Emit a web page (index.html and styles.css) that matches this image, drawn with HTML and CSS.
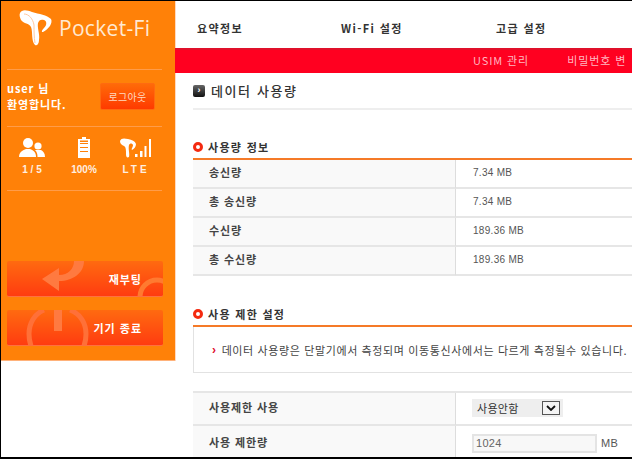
FILE: index.html
```html
<!DOCTYPE html>
<html lang="ko">
<head>
<meta charset="utf-8">
<title>Pocket-Fi</title>
<link rel="stylesheet" href="styles.css">
</head>
<body>
<div class="frame">
  <aside class="side">
    <div class="brand">
      <svg class="logo" width="34" height="38" viewBox="5 5 34 38"><path d="M6 9C8 5 13 6 18 8C25 10 33 11 37 15C39 19 35 25 29 28C27 28 28 26 30 24C33 21 33 17 30 16C27 15 25 16 24 19C23 24 26 30 25 36C25 40 23 42 21 41C17 37 19 28 17 23C15 19 10 20 7 16C6 14 5 11 6 9Z" fill="#fff"/><path d="M10 10C15 10 19 15 20 21C20 27 20 33 21 39" fill="none" stroke="#ffc9a0" stroke-width="1"/></svg>
      <span class="brand-name">Pocket-Fi</span>
    </div>
    <div class="user">
      <div class="welcome">user 님<br>환영합니다.</div>
      <button class="logout">로그아웃</button>
    </div>
    <div class="status">
      <div class="stat">
        <svg width="26" height="20" viewBox="0 0 26 20"><circle cx="9" cy="5" r="5" fill="#fff"/><path d="M0 19C0 14 4 12 7 11H11C14 12 17 14 17 19Z" fill="#fff"/><circle cx="19" cy="8" r="3.600" fill="#fff"/><path d="M16 12H22C24 13 26 15 26 19H18.500C18.500 16 18 14 16 12Z" fill="#fff"/></svg>
        <span>1 / 5</span>
      </div>
      <div class="stat">
        <svg width="14" height="21" viewBox="0 0 14 21"><path d="M5 0H9V2H13V21H1V2H5Z" fill="#fff"/><path d="M3 6.500H11M3 10.500H11M3 14.500H11" stroke="#ff8108" stroke-width="1.200"/><path d="M3 3.500H11V5H3Z" fill="#ff8108"/></svg>
        <span>100%</span>
      </div>
      <div class="stat">
        <svg width="33" height="20" viewBox="0 0 33 20"><path d="M0 3C1 0 4 0 8 1C12 2 15 3 16 6C16 9 14 11 12 12C11 11 13 9 13 7C12 5 10 5 9 7C8 11 10 16 9 19C7 20 6 19 6 16C6 12 6 9 4 8C2 7 0 6 0 3Z" fill="#fff"/><path d="M15 16H17.500V19H15ZM20 13H22.500V19H20ZM24.500 8H26.500V19H24.500ZM29 1H31V19H29Z" fill="#fff"/></svg>
        <span class="wide">LTE</span>
      </div>
    </div>
    <div class="actions">
      <button class="action">
        <svg class="bg-icon" width="156" height="36" viewBox="0 0 156 36"><path d="M77 0C77 12 66 20 52 20V30L35 18L52 7V14C61 14 67 8 67 0Z" fill="#ff7a40"/><circle cx="150" cy="36" r="17" fill="none" stroke="#ff7a30" stroke-width="5"/></svg>
        <span>재부팅</span>
      </button>
      <button class="action">
        <svg class="bg-icon" width="156" height="36" viewBox="0 0 156 36"><path d="M37 0C27 4 22 14 22 24C22 29 23 33 24 36M63 0C74 4 79 14 79 24C79 29 78 33 77 36" fill="none" stroke="#ff7038" stroke-width="5"/><path d="M47 0H55V21H47Z" fill="#ff7a40"/></svg>
        <span>기기 종료</span>
      </button>
    </div>
  </aside>
  <main class="main">
    <nav class="nav">
      <a>요약정보</a><a>Wi-Fi 설정</a><a>고급 설정</a>
    </nav>
    <div class="subnav"><a>USIM 관리</a><a>비밀번호 변</a></div>
    <div class="content">
      <h1 class="title"><span class="title-icon">›</span>데이터 사용량</h1>
      <h2 class="section first"><span class="dot"></span>사용량 정보</h2>
      <div class="table">
        <div class="th">송신량</div><div class="td">7.34 MB</div>
        <div class="th">총 송신량</div><div class="td">7.34 MB</div>
        <div class="th">수신량</div><div class="td">189.36 MB</div>
        <div class="th">총 수신량</div><div class="td">189.36 MB</div>
      </div>
      <h2 class="section second"><span class="dot"></span>사용 제한 설정</h2>
      <div class="notice"><span class="chev">›</span>데이터 사용량은 단말기에서 측정되며 이동통신사에서는 다르게 측정될수 있습니다.</div>
      <div class="table form">
        <div class="th">사용제한 사용</div>
        <div class="td"><div class="select"><span>사용안함</span><span class="arrow"><svg width="10" height="6" viewBox="0 0 10 6"><path d="M1 1L5 5L9 1" fill="none" stroke="#111" stroke-width="1.800"/></svg></span></div></div>
        <div class="th last">사용 제한량</div>
        <div class="td last"><div class="input">1024</div><span class="unit">MB</span></div>
      </div>
    </div>
  </main>
</div>
</body>
</html>
```
FILE: styles.css
```css
* { box-sizing: border-box; }
html, body { margin: 0; padding: 0; background: #fff; }
body { font-family: "Noto Sans CJK KR", "Liberation Sans", sans-serif; font-size: 11px; color: #333; }
.frame { width: 632px; height: 459px; border: solid #000; border-width: 1px 0 2px 1px; display: flex; align-items: flex-start; overflow: hidden; }

.side { width: 174px; height: 360px; flex: none; background: #ff8108; border-bottom: 1px solid #ffb27a; padding: 0 13px 0 6px; color: #fff; box-shadow: 1px 0 0 #ffd9c0; }
.brand { height: 69px; display: flex; align-items: center; gap: 6px; padding: 0 0 14px 12px; border-bottom: 1px solid #ff9c4a; }
.brand-name { font: 21px/1 "Open Sans", "Liberation Sans", sans-serif; color: #ffe9d2; letter-spacing: .3px; }
.user { height: 57px; display: flex; align-items: center; justify-content: space-between; padding: 0 7px 4px 0; border-bottom: 1px solid #ff9c4a; }
.welcome { font: bold 11px/16px "Noto Sans CJK KR", "Liberation Sans", sans-serif; letter-spacing: .9px; }
.logout { width: 55px; height: 27px; margin: 0; padding: 0; border: 1px solid #ff6a10; border-radius: 2px; background: linear-gradient(#ff6a08, #ff3a00); color: #ffd9c0; font: 10px "Noto Sans CJK KR", sans-serif; letter-spacing: .3px; }
.status { height: 64px; display: flex; justify-content: space-between; padding: 5px 9px 0 8px; border-bottom: 1px solid #ff9c4a; }
.stat { width: 34px; display: flex; flex-direction: column; align-items: center; gap: 6px; height: 44px; justify-content: flex-end; }
.stat span { font: bold 10px/12px "Liberation Sans", sans-serif; white-space: nowrap; color: #ffefe0; }
.stat .wide { letter-spacing: 3px; }
.actions { margin-top: 70px; display: flex; flex-direction: column; gap: 13px; }
.action { position: relative; width: 156px; height: 36px; margin: 0; padding: 0 21px 0 0; border: 0; border-bottom: 1px solid #ff7040; border-radius: 2px; background: linear-gradient(#ff6a10, #ff3c10); overflow: hidden; color: #fff; text-align: right; font: bold 11px "Noto Sans CJK KR", sans-serif; letter-spacing: 1px; }
.action span { position: relative; }
.bg-icon { position: absolute; left: 0; top: 0; }

.main { flex: none; width: 457px; overflow: hidden; }
.nav { height: 47px; display: flex; align-items: center; padding: 6px 0 0 22px; font: bold 11px "Noto Sans CJK KR", sans-serif; color: #333; letter-spacing: 1.4px; }
.nav a:nth-child(1) { width: 144px; }
.nav a:nth-child(2) { width: 155px; }
.subnav { height: 25px; background: #ff0020; border-top: 2px solid #e0102a; display: flex; align-items: center; padding: 0 0 3px 298px; gap: 38px; color: #ffb8c0; font-size: 11px; white-space: nowrap; letter-spacing: .9px; }
.content { padding-left: 18px; width: 470px; }
.title { height: 37px; margin: 0; border-bottom: 2px solid #eee; display: flex; align-items: center; gap: 6px; font-size: 13px; line-height: 1; font-weight: 500; color: #333; letter-spacing: 1.6px; }
.title-icon { width: 12px; height: 12px; border-radius: 2px; background: linear-gradient(#666, #111); color: #fff; font: bold 9px/11px "Liberation Sans", sans-serif; text-align: center; letter-spacing: 0; }
.section { height: 24px; margin: 0; display: flex; align-items: center; gap: 5px; font-size: 11px; font-weight: 700; color: #333; border-bottom: 2px solid #f57a28; letter-spacing: 1.300px; }
.section.first { margin-top: 26px; }
.section.second { margin-top: 27px; }
.dot { width: 10px; height: 10px; border-radius: 50%; border: 3px solid #f42a10; background: #fff; }
.table { display: grid; grid-template-columns: 263px 1fr; }
.th, .td { height: 29px; display: flex; align-items: center; border-bottom: 2px solid #e6e6e6; }
.th { background: #f9f9f9; border-right: 1px solid #ddd; padding: 0 0 4px 16px; font-weight: 700; color: #444; letter-spacing: .9px; }
.td { padding: 0 0 2px 17px; font: 10px "Liberation Sans", sans-serif; color: #555; letter-spacing: .3px; }
.notice { height: 46px; border: solid #e2e2e2; border-width: 0 0 1px 1px; display: flex; align-items: center; padding-left: 18px; white-space: nowrap; color: #444; font-size: 11px; letter-spacing: .62px; }
.chev { color: #e01030; font: bold 12px "Liberation Sans", sans-serif; margin-right: 5px; }
.form { margin-top: 18px; border-top: 2px solid #e6e6e6; }
.form .th, .form .td { height: 33px; }
.form .th.last, .form .td.last { height: 36px; border-bottom: 0; }
.select { width: 91px; height: 18px; margin-left: -1px; background: #eee; padding: 1px 3px 1px 5px; display: flex; justify-content: space-between; align-items: center; font: 11px "Noto Sans CJK KR", sans-serif; color: #333; letter-spacing: .3px; }
.arrow { width: 18px; height: 14px; border: 1px solid #555; background: #f4f4f4; display: flex; align-items: center; justify-content: center; }
.input { width: 125px; height: 19px; margin-left: -1px; border: 2px solid #e4e4e4; background: #f8f8f8; padding-left: 2px; font: 11px/15px "Liberation Sans", sans-serif; color: #666; }
.unit { margin-left: 4px; font-size: 11px; color: #555; }
```
